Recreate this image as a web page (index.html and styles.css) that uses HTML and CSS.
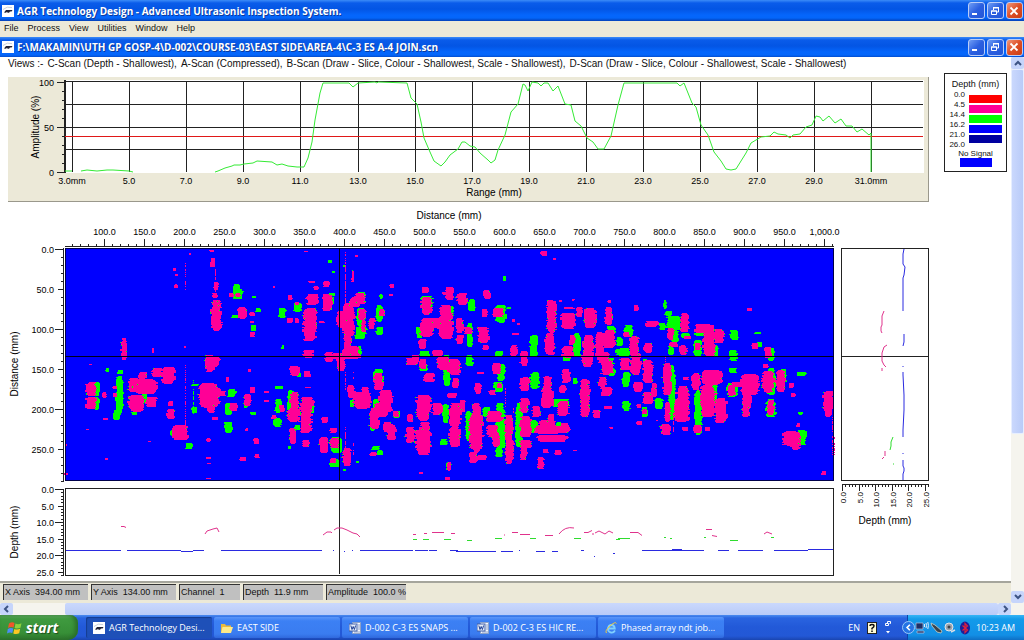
FILE: index.html
```html
<!DOCTYPE html>
<html lang="en">
<head>
    <meta charset="UTF-8">
    <meta name="viewport" content="width=device-width, initial-scale=1.0">
    <title>AGR Technology Design</title>
    <link rel="stylesheet" href="styles.css">
</head>
<body>
<!-- shared icons -->
<svg class="defs" width="0" height="0" aria-hidden="true">
    <symbol id="icon-agr" viewBox="0 0 12 12">
        <rect width="12" height="12" fill="#fff"/>
        <path d="M1 4.5Q5 .8 10 2.6" stroke="#c9d2dc" fill="none"/>
        <path d="M2 7.6L4 5h6.5L9.6 6.4H8L7 7.8H5.6L5 6.8 4 7.8z" fill="#223"/>
    </symbol>
    <symbol id="icon-min" viewBox="0 0 14 14"><path d="M3 10h5" stroke="#fff" stroke-width="2"/></symbol>
    <symbol id="icon-restore" viewBox="0 0 14 14">
        <path d="M5.5 6V4h5v4H9M5 3.5h6M3.5 7h5v3.5h-5zM3 7h6" stroke="#fff" fill="none"/>
    </symbol>
    <symbol id="icon-close" viewBox="0 0 14 14"><path d="M3.5 3.5l7 7M10.5 3.5l-7 7" stroke="#fff" stroke-width="1.8"/></symbol>
    <symbol id="icon-word" viewBox="0 0 12 12">
        <path d="M3.500 .5h8v11h-8z" fill="#f4f7ff" stroke="#8da2c8"/>
        <path d="M9 3h2M9 5h2M9 7h2M5 10h6" stroke="#8da2c8"/>
        <rect x="0" y="2" width="8" height="7" fill="#e8effc" stroke="#3e5ea8"/>
        <path d="M1.800 3.500l1.200 4 1.200-3 1.200 3 1.200-4" stroke="#1e3f94" fill="none"/>
    </symbol>
</svg>

<header class="titlebar">
    <svg class="app-icon"><use href="#icon-agr"/></svg>
    <h1>AGR Technology Design - Advanced Ultrasonic Inspection System.</h1>
    <div class="win-buttons">
        <button type="button" aria-label="Minimize"><svg><use href="#icon-min"/></svg></button>
        <button type="button" aria-label="Restore"><svg><use href="#icon-restore"/></svg></button>
        <button type="button" class="close" aria-label="Close"><svg><use href="#icon-close"/></svg></button>
    </div>
</header>

<nav class="menubar">
    <button type="button">File</button>
    <button type="button">Process</button>
    <button type="button">View</button>
    <button type="button">Utilities</button>
    <button type="button">Window</button>
    <button type="button">Help</button>
</nav>

<div class="titlebar document">
    <svg class="app-icon"><use href="#icon-agr"/></svg>
    <h2>F:\MAKAMIN\UTH GP GOSP-4\D-002\COURSE-03\EAST SIDE\AREA-4\C-3 ES A-4 JOIN.scn</h2>
    <div class="win-buttons">
        <button type="button" aria-label="Minimize file"><svg><use href="#icon-min"/></svg></button>
        <button type="button" aria-label="Restore file"><svg><use href="#icon-restore"/></svg></button>
        <button type="button" class="close" aria-label="Close file"><svg><use href="#icon-close"/></svg></button>
    </div>
</div>

<div class="client">
    <main class="scan">
        <p class="views">
            <span>Views :-</span>
            <span>C-Scan (Depth - Shallowest),</span>
            <span>A-Scan (Compressed),</span>
            <span>B-Scan (Draw - Slice, Colour - Shallowest, Scale - Shallowest),</span>
            <span>D-Scan (Draw - Slice, Colour - Shallowest, Scale - Shallowest)</span>
        </p>

        <div class="top-row">
            <svg id="a-scan" class="a-scan" viewBox="8 77 921 125"></svg>
            <section class="legend">
                <h3>Depth (mm)</h3>
                <div class="legend-body">
                    <div class="legend-values">
                        <span>0.0</span><span>4.5</span><span>14.4</span><span>16.2</span><span>21.0</span><span>26.0</span>
                    </div>
                    <div class="legend-colours">
                        <i class="red"></i><i class="pink"></i><i class="green"></i><i class="blue"></i><i class="navy"></i>
                    </div>
                </div>
                <p>No Signal</p>
                <i class="no-signal"></i>
            </section>
        </div>

        <div class="scan-grid">
            <svg id="c-scan" viewBox="0 206 834 278"></svg>
            <svg id="d-scan" class="tall" viewBox="834 206 177 375"></svg>
            <svg id="b-scan" viewBox="0 484 834 97"></svg>
        </div>

        <footer class="statusbar">
            <span class="w-axis">X Axis&nbsp; 394.00 mm</span>
            <span class="w-axis">Y Axis&nbsp; 134.00 mm</span>
            <span class="w-channel">Channel&nbsp; 1</span>
            <span class="w-depth">Depth&nbsp; 11.9 mm</span>
            <span class="w-amp">Amplitude&nbsp; 100.0 %</span>
        </footer>
    </main>

    <div class="scroll-v">
        <button type="button" aria-label="Scroll up"><svg viewBox="0 0 12 12"><path d="M3 8l3-3 3 3"/></svg></button>
        <div class="track"><div class="thumb"></div></div>
        <button type="button" aria-label="Scroll down"><svg viewBox="0 0 12 12"><path d="M3 4l3 3 3-3"/></svg></button>
    </div>
    <div class="scroll-h">
        <button type="button" aria-label="Scroll left"><svg viewBox="0 0 12 12"><path d="M7 3L4 6l3 3"/></svg></button>
        <div class="track"><div class="thumb"></div></div>
        <button type="button" aria-label="Scroll right"><svg viewBox="0 0 12 12"><path d="M5 3l3 3-3 3"/></svg></button>
    </div>
</div>

<div class="taskbar">
    <button type="button" class="start">
        <svg viewBox="0 0 16 16">
            <path d="M2 3.500Q5 1.500 7.500 3L6.600 7.500Q4 6.200 1 8z" fill="#f0562b"/>
            <path d="M8.500 3.400Q11 5 14.500 3.200L13.500 7.800Q10.500 9.200 7.600 7.900z" fill="#8dd13c"/>
            <path d="M.8 8.900Q3.600 7.300 6.300 8.500L5.300 13Q2.800 11.800 0 13.400z" fill="#4c8df6"/>
            <path d="M7.300 8.900Q10 10.300 13.200 8.800L12.200 13.300Q9.200 14.800 6.300 13.400z" fill="#fbc723"/>
        </svg>
        <span>start</span>
    </button>
    <div class="tasks">
        <button type="button" class="active"><svg><use href="#icon-agr"/></svg>AGR Technology Desi...</button>
        <button type="button">
            <svg viewBox="0 0 12 12"><path d="M0 2h4l1 1.500h5V11H0z" fill="#e9b93c"/><path d="M1.500 5H12l-2 6H0z" fill="#fde98a"/></svg>EAST SIDE
        </button>
        <button type="button"><svg><use href="#icon-word"/></svg>D-002 C-3 ES SNAPS ...</button>
        <button type="button"><svg><use href="#icon-word"/></svg>D-002 C-3 ES HIC RE...</button>
        <button type="button">
            <svg viewBox="0 0 12 12">
                <path d="M10 8.500Q8.500 11 6 10.500 3 10 3 6.500 3.500 3 6.500 3 9.500 3.200 9.800 6.500H4" stroke="#7fd0ff" stroke-width="1.800" fill="none"/>
                <path d="M1.500 11Q-.5 9 5 4T11.500 1.500" stroke="#f5c93a" fill="none"/>
            </svg>Phased array ndt job...
        </button>
    </div>
    <div class="language">
        <span>EN</span>
        <svg class="help" viewBox="0 0 10 12">
            <rect x=".5" y=".5" width="9" height="11" fill="#fffbd6" stroke="#222"/>
            <path d="M3 4q0-1.500 2-1.500T7 4q0 1-2 2.300V7.500M5 8.500V10" stroke="#111" stroke-width="1.500" fill="none"/>
        </svg>
        <svg class="lang-menu" viewBox="0 0 8 16">
            <path d="M3.500 3V1.500h3v2H5.500M1.500 3.500h3v2h-3z" stroke="#fff" fill="none"/>
            <path d="M2 11h4L4 13.500z" fill="#fff"/>
        </svg>
    </div>
    <div class="tray">
        <button type="button" aria-label="Show hidden icons"><svg viewBox="0 0 12 12"><path d="M7.500 3L4.500 6l3 3" stroke="#fff" stroke-width="1.800" fill="none"/></svg></button>
        <svg class="tray-icons" viewBox="0 0 56 16">
            <path d="M1 3h7v6H1zM2 11h7v2H2z" fill="#1d2f66" stroke="#b9c4dd" stroke-width=".7"/>
            <path d="M9.500 4v3M11 3q1 2.500 0 5M12.800 2q1.200 3.500 0 7" stroke="#dfe9fa" fill="none"/>
            <path d="M16 3l4 2 7 6-1 2-4-1-5-6z" fill="#39424c" stroke="#c9d0c4" stroke-width=".8"/>
            <circle cx="34" cy="7" r="4" fill="#9aa3ae" stroke="#e2e6ea"/>
            <circle cx="34" cy="7" r="1.500" fill="#3c434c"/>
            <path d="M36 12l4-2" stroke="#d8dde4" stroke-width="1.500"/>
            <ellipse cx="50" cy="8" rx="5" ry="6.500" fill="#1b1f9a"/>
            <path d="M47.500 5.500l5 4.500L50 12.500v-9L52.500 6l-5 4.500" stroke="#e0203c" fill="none" stroke-width="1.200"/>
        </svg>
        <time>10:23 AM</time>
    </div>
</div>

<script src="scans.js"></script>
</body>
</html>
```

FILE: styles.css
```css
* {
    box-sizing: border-box;
}

body {
    margin: 0;
    min-height: 100vh;
    display: flex;
    flex-direction: column;
    background: #fff;
    color: #111;
    font-family: "Liberation Sans", Arial, sans-serif;
    font-size: 10px;
}

h1, h2, h3, p {
    margin: 0;
}

button {
    padding: 0;
    border: none;
    background: none;
    color: inherit;
    font: inherit;
}

.defs {
    position: absolute;
}

/* Title bars */
.titlebar {
    display: flex;
    align-items: center;
    flex: none;
    height: 21px;
    padding: 0 1px 0 2px;
    background: linear-gradient(#3c8cf8 0, #0a5cea 3px, #0355e4 9px, #0566fc 15px, #0466fa 18px, #0340b8 21px);
}

.titlebar.document {
    height: 20px;
}

.titlebar h1, .titlebar h2 {
    flex: 1;
    margin-left: 3px;
    color: #fff;
    font-family: "Open Sans", "Trebuchet MS", sans-serif;
    font-size: 10px;
    font-weight: bold;
    line-height: 16px;
    text-shadow: 1px 1px #0b3a9c;
    white-space: nowrap;
}

.app-icon {
    width: 12px;
    height: 12px;
}

.win-buttons {
    display: flex;
    gap: 2px;
}

.win-buttons button {
    width: 17px;
    height: 17px;
    border: 1px solid #b9cdf8;
    border-radius: 3px;
    background: linear-gradient(135deg, #6f9df5, #2b5fe0 50%, #2456d6);
}

.win-buttons .close {
    background: linear-gradient(135deg, #f0987c, #de4f26 50%, #c93c14);
}

.win-buttons svg {
    display: block;
    width: 14px;
    height: 14px;
}

.menubar {
    display: flex;
    flex: none;
    gap: 9px;
    height: 16px;
    padding-left: 4px;
    padding-bottom: 2px;
    background: #ece9d8;
    font-size: 9px;
}

/* Client area */
.client {
    flex: 1;
    display: grid;
    grid-template-columns: minmax(0, 1fr) 13px;
    grid-template-rows: 1fr 12px;
    background: #f5f4ee;
}

.scan {
    display: flex;
    flex-direction: column;
    background: #fff;
}

.scan svg {
    display: block;
    width: 100%;
    overflow: visible;
}

.views {
    display: flex;
    gap: 4px;
    height: 14px;
    padding-left: 8px;
    line-height: 14px;
    white-space: nowrap;
}

.top-row {
    display: flex;
    align-items: flex-start;
    gap: 15px;
    padding: 2px 4px 4px 8px;
}

.a-scan {
    flex: 1;
    min-width: 0;
    margin-top: 4px;
    background: #ece9d8;
}

.legend {
    flex: none;
    width: 63px;
    height: 99px;
    padding-top: 4px;
    border: 1px solid #222;
    font-size: 8px;
    text-align: center;
}

.legend h3 {
    font-size: 9px;
    font-weight: normal;
    line-height: 13px;
}

.legend-body {
    display: flex;
    justify-content: flex-end;
    gap: 4px;
    padding-right: 4px;
}

.legend-values {
    display: flex;
    flex-direction: column;
    text-align: right;
}

.legend-values span {
    height: 10px;
    line-height: 8px;
}

.legend-colours {
    display: flex;
    flex-direction: column;
    gap: 2px;
    width: 33px;
    padding-top: 4px;
}

.legend-colours i {
    height: 8px;
}

.red { background: #f00; }
.pink { background: #ff0096; }
.green { background: #0f0; }
.blue { background: #00f; }
.navy { background: #0000a0; }

.legend p {
    line-height: 8px;
    margin-top: -1px;
}

.no-signal {
    display: block;
    width: 32px;
    height: 9px;
    margin: 0 auto;
    background: #00f;
}

.scan-grid {
    display: grid;
    grid-template-columns: 834fr 177fr;
}

.scan-grid .tall {
    grid-row: span 2;
}

/* Text and lines inside the charts */
.tick-label {
    font-size: 9px;
}

#d-scan .tick-label {
    font-size: 8px;
}

.axis-title {
    font-size: 10px;
}

.line {
    fill: none;
    stroke: #222;
    shape-rendering: crispEdges;
}

.cells {
    shape-rendering: crispEdges;
}

.statusbar {
    display: flex;
    gap: 3px;
    height: 22px;
    margin-top: auto;
    padding: 1px 3px 3px;
    border-top: 2px solid #a5a59c;
    background: #ece9d8;
    font-size: 9px;
    line-height: 15px;
    white-space: nowrap;
}

.statusbar span {
    padding-left: 1px;
    border-top: 1px solid #333;
    border-left: 1px solid #333;
    background: #c0c0c0;
}

.w-axis { width: 85px; }
.w-channel { width: 61px; }
.w-depth { width: 80px; }
.w-amp { width: 80px; }

/* Scrollbars */
.scroll-v, .scroll-h {
    display: flex;
}

.scroll-v {
    flex-direction: column;
}

.track {
    flex: 1;
    display: flex;
}

.scroll-v .track {
    flex-direction: column;
}

.scroll-v .thumb {
    height: 70%;
    border: 1px solid #e6eeff;
    border-radius: 2px;
    background: linear-gradient(90deg, #cad8fd, #b9cbf8);
}

.scroll-h .thumb {
    flex: 1;
    margin-left: 52px;
    border-radius: 2px;
    background: linear-gradient(#cad8fd, #b9cbf8);
}

.scroll-v button, .scroll-h button {
    flex: none;
    width: 13px;
    height: 12px;
    border-radius: 2px;
    background: #c6d5fb;
}

.scroll-v button svg, .scroll-h button svg {
    display: block;
    width: 12px;
    height: 12px;
    margin: auto;
    fill: none;
    stroke: #3d5484;
    stroke-width: 2;
}

/* Taskbar */
.taskbar {
    display: flex;
    align-items: stretch;
    flex: none;
    height: 25px;
    background: linear-gradient(#4b8cf0 0, #2a64e0 3px, #2259d8 12px, #2358d6 21px, #1a45b0 25px);
    color: #fff;
    font-family: "Open Sans", Tahoma, sans-serif;
    font-size: 9px;
}

.start {
    display: flex;
    align-items: center;
    gap: 3px;
    width: 78px;
    padding-left: 7px;
    border-radius: 0 8px 10px 0;
    background: linear-gradient(#65b065 0, #3f9a3f 4px, #378f37 18px, #2c742c 25px);
    box-shadow: inset -3px 0 4px #2a6d2a;
    font-size: 14px;
    font-style: italic;
    font-weight: bold;
    text-shadow: 1px 1px 1px #1d4d1d;
}

.start svg {
    width: 16px;
    height: 16px;
}

.tasks {
    flex: 1;
    display: flex;
    gap: 2px;
    min-width: 0;
    padding: 2px 0 2px 8px;
}

.tasks button {
    display: flex;
    align-items: center;
    gap: 4px;
    flex: 0 1 126px;
    min-width: 0;
    padding-left: 7px;
    border-radius: 2px;
    background: linear-gradient(#5a96fa 0, #3c80f4 4px, #3a7cf0 17px, #3068dc 21px);
    white-space: nowrap;
}

.tasks .active {
    background: #1e50b8;
    box-shadow: inset 1px 1px 1px #153c90;
}

.tasks svg {
    flex: none;
    width: 12px;
    height: 12px;
}

.language {
    display: flex;
    align-items: center;
    gap: 7px;
    margin-right: 15px;
}

.help {
    width: 10px;
    height: 12px;
}

.lang-menu {
    width: 8px;
    height: 16px;
}

.tray {
    display: flex;
    align-items: center;
    width: 117px;
    border-left: 1px solid #1042a8;
    background: linear-gradient(#35b5f6 0, #139bea 4px, #128fe6 20px, #0f6fc4 25px);
}

.tray button {
    flex: none;
    width: 13px;
    height: 13px;
    margin-left: -6px;
    border: 1px solid #9ac8f8;
    border-radius: 50%;
    background: #2474e4;
}

.tray button svg {
    display: block;
}

.tray-icons {
    flex: none;
    width: 56px;
    height: 16px;
    margin: 0 5px 0 0;
}

.tray time {
    white-space: nowrap;
}
```

FILE: scans.js
```js
const NS = 'http://www.w3.org/2000/svg';
const PINK = '#ff0096';
const GREEN = '#00ff00';
const BLUE = '#0000ff';

function add(parent, tag, attrs, text) {
    const node = document.createElementNS(NS, tag);
    for (const key in attrs) {
        node.setAttribute(key, attrs[key]);
    }
    if (text) {
        node.textContent = text;
    }
    parent.appendChild(node);
    return node;
}

function line(svg, d, stroke) {
    return add(svg, 'path', { d: d, class: 'line', style: stroke ? 'stroke:' + stroke : '' });
}

function label(svg, x, y, text, anchor, cls) {
    return add(svg, 'text', { x: x, y: y, 'text-anchor': anchor || 'middle', class: cls || 'tick-label' }, text);
}

function sideTitle(svg, x, y, text) {
    const node = label(svg, x, y, text, 'middle', 'axis-title');
    node.setAttribute('transform', `rotate(-90 ${x} ${y})`);
}

// ---------- A-Scan ----------
const aScan = document.getElementById('a-scan');
add(aScan, 'rect', { x: 65, y: 80, width: 859, height: 93, fill: '#fff' });
line(aScan, 'M8 201.5H928.500V77', '#9a988c');
line(aScan, 'M65 81.500H923M65 104.500H923M65 127.500H923M65 149.500H923M64.500 80V173M65.500 80V173');
for (let i = 0; i < 15; i++) {
    const x = Math.round(72 + i * 57.1);
    const mm = 3 + i * 2;
    line(aScan, `M${x + 0.5} 81V172`);
    label(aScan, x, 184, mm.toFixed(1) + (i === 0 || i === 14 ? 'mm' : ''));
}
for (let p = 0; p <= 100; p += 10) {
    const y = Math.round(172 - p * 0.9) + 0.5;
    line(aScan, `M${p % 50 ? 62 : 57} ${y}H65`);
}
label(aScan, 54, 86, '100', 'end');
label(aScan, 54, 131, '50', 'end');
label(aScan, 54, 176, '0', 'end');
sideTitle(aScan, 39, 127, 'Amplitude (%)');
label(aScan, 494, 196, 'Range (mm)', 'middle', 'axis-title');
line(aScan, 'M65 136.500H923', '#e01818');

const signal = [
    [65,171, 72,171],
    [81,171, 87,170, 97,171, 107,170, 113,170, 129,171, 133,172],
    [215,172, 218,171, 225,168, 232,166, 234,165, 240,165, 244,164, 253,163, 257,161, 272,162, 277,165, 282,164,
     288,166, 297,167, 304,167, 308,158, 312,142, 315,120, 320,93, 323,83, 349,83, 353,87, 358,83, 375,82, 377,83,
     378,82, 407,83, 411,98, 417,104, 421,122, 424,138, 430,152, 434,161, 441,166, 445,162, 450,155, 458,149,
     462,142, 465,142, 470,146, 475,147, 480,153, 488,160, 491,163, 495,160, 498,150, 505,135, 511,112, 518,104,
     523,84, 525,85, 528,91, 532,82, 538,83, 541,86, 544,83, 548,83, 553,91, 558,86, 565,104, 571,105, 575,121,
     581,126, 587,138, 593,142, 598,149, 604,149, 611,136, 618,105, 624,83, 677,83, 680,86, 684,83, 692,103,
     696,107, 701,125, 708,135, 714,152, 721,161, 726,169, 731,170, 736,169, 746,153, 751,143, 761,137, 770,136,
     774,132, 778,134, 786,135, 790,138, 793,135, 800,134, 806,127, 812,125, 816,116, 820,117, 823,121, 829,116,
     835,123, 841,119, 846,126, 852,126, 857,132, 862,129, 869,135, 871,133, 871,172]
];
signal.forEach(points => add(aScan, 'polyline', { points: points.join(' '), fill: 'none', stroke: '#35ea35' }));

// ---------- C-Scan ----------
// Indications are grouped in three strips. Edges are x1, y1, x2, y2 in scan steps, three steps to a unit.
const strips = [
    {
        x: 0,
        green: [
            [697,132,720,178],[700,148,730,178],[695,224,715,234],[757,168,768,175],[768,204,782,216],[752,256,768,272],
            [835,205,858,235],[880,188,906,216],[985,60,994,68],[998,93,1006,99],[985,160,1006,168],[990,170,1000,192],
            [282,425,298,468],[282,470,297,510],[354,390,368,402],[348,408,370,520],[338,510,363,540],[318,385,326,395],
            [425,445,440,490],[395,516,412,526],[682,448,708,470],[675,488,695,526],[672,545,698,578],[732,485,742,505],
            [750,515,768,525],[555,608,578,626],[575,500,592,520],[575,433,595,438],[825,438,850,446],[825,478,845,520],
            [820,535,845,562],[862,450,880,520],[928,490,942,520],[885,555,900,570],[1000,590,1026,640],
            [990,660,1018,682],[865,618,872,626],[846,315,850,328],[892,400,902,410],[512,570,520,585]
        ],
        pink: [
            [257,425,292,468],[255,470,290,508],[368,293,378,308],[363,306,381,360],[384,415,420,455],[415,397,440,418],
            [400,418,475,462],[452,385,490,412],[484,382,527,432],[384,466,435,516],[437,472,472,500],[338,438,350,448],
            [340,460,350,472],[308,455,318,475],[505,482,520,497],[500,508,525,538],[514,556,567,600],[595,428,660,505],
            [622,495,645,520],[655,453,678,468],[638,530,655,540],[615,348,663,380],[616,345,645,395],[633,180,666,272],
            [642,125,654,150],[638,158,652,174],[640,180,656,200],[632,55,644,82],[628,30,642,36],[712,200,742,236],
            [688,160,700,170],[706,160,720,172],[748,215,764,228],[748,242,764,250],[750,275,764,292],[750,440,765,458],
            [690,488,712,514],[733,462,754,498],[865,165,876,180],[862,235,878,250],[885,235,895,248],[885,185,896,194],
            [918,162,958,194],[925,122,945,130],[940,137,955,150],[970,122,990,140],[965,162,995,214],[910,205,955,245],
            [907,235,950,303],[908,330,942,354],[975,335,1000,365],[960,242,972,250],[870,378,900,408],[912,392,932,410],
            [870,455,898,530],[860,505,900,545],[838,495,852,515],[900,472,942,520],[897,510,937,578],[915,440,935,445],
            [868,565,888,612],[908,600,930,622],[965,532,985,548],[958,590,985,640],[990,565,1010,580],
            [988,595,1018,625],[990,655,1008,668],[720,650,738,662],[762,595,776,612],[765,642,778,655],[620,595,632,605],
            [618,650,632,658],[738,563,744,572],[745,388,752,395],[457,325,461,340],[793,452,806,458],[793,480,806,486],
            [815,525,828,538],[522,85,527,92],[524,102,532,108],[524,132,532,145],[568,38,572,46],[624,668,632,673],
            [620,713,632,718],[680,412,686,425],[268,372,274,376],[308,535,322,539],[258,566,264,570],[316,655,324,659],
            [446,602,450,606],[195,612,200,618],[195,698,202,704],[912,32,922,37],[820,138,826,144],[553,318,557,324]
        ],
        dashes: [[554,65,155],[554,360,565],[1034,60,240],[646,88,180]],
        greenDashes: [[578,420,520]]
    },
    {
        x: 330,
        green: [
            [80,155,110,190],[80,205,108,262],[73,262,112,298],[138,195,158,245],[138,262,160,284],[270,168,310,200],
            [258,260,280,295],[350,198,372,232],[415,178,435,212],[412,248,428,320],[495,195,530,248],[521,108,527,122],
            [530,200,542,208],[130,388,162,430],[60,480,72,502],[130,478,145,510],[120,535,135,572],[125,618,148,630],
            [142,630,158,645],[190,512,210,535],[268,332,298,350],[408,345,430,378],[495,334,518,350],[342,370,360,438],
            [490,425,518,455],[500,372,526,422],[338,492,356,548],[406,512,425,602],[458,502,480,530],[495,490,526,630],
            [330,598,352,615],[495,628,518,650],[557,490,577,620],[600,395,628,448],[600,285,625,350],[730,280,752,350],
            [700,340,722,362],[728,415,742,432],[600,540,622,580],[680,545,692,580],[658,478,722,500],[0,590,36,640],
            [0,658,28,682],[268,370,292,392],[82,318,94,345],[340,345,358,360],[150,162,156,176],[350,665,364,690],
            [42,76,48,82],[78,662,86,668],[40,688,46,694],[500,545,524,560]
        ],
        pink: [
            [75,160,106,192],[60,170,90,200],[38,190,75,290],[20,212,55,265],[42,280,65,345],[36,318,88,352],[0,340,94,358],
            [20,352,45,392],[85,208,108,240],[116,235,135,268],[147,208,165,228],[95,240,106,275],[180,132,190,145],
            [66,90,71,125],[178,161,188,168],[275,140,295,160],[272,172,308,225],[268,235,312,290],[265,298,290,328],
            [300,235,335,265],[345,142,372,180],[338,155,352,165],[380,158,412,196],[328,195,368,250],[322,228,370,298],
            [378,235,400,280],[378,285,402,312],[402,262,426,282],[460,150,482,178],[455,208,472,232],[485,205,522,232],
            [442,262,476,290],[445,285,478,308],[458,315,476,330],[632,32,650,48],[650,180,680,280],[690,220,738,266],
            [740,200,757,230],[765,208,800,262],[645,278,675,345],[718,286,735,315],[695,318,732,355],[758,288,790,378],
            [542,315,562,352],[570,332,595,378],[305,330,340,350],[225,355,265,376],[245,345,268,362],[268,358,290,388],
            [320,352,358,390],[350,358,395,405],[280,400,315,425],[367,415,388,445],[440,397,460,403],[435,428,453,462],
            [484,368,512,402],[475,450,498,466],[502,428,514,445],[132,398,160,450],[52,435,75,475],[95,440,115,462],
            [68,455,125,508],[144,450,190,515],[130,490,175,530],[118,505,148,568],[160,545,188,575],[170,555,198,600],
            [190,514,206,532],[120,636,140,648],[256,465,305,542],[305,490,340,525],[232,522,248,545],[272,545,298,570],
            [256,560,305,645],[228,562,255,610],[350,460,382,474],[355,488,395,560],[388,480,405,515],[356,560,392,622],
            [425,490,455,640],[415,518,462,630],[418,635,442,670],[468,512,520,545],[470,555,505,590],[487,575,508,622],
            [525,525,550,600],[526,590,552,672],[570,475,598,520],[570,528,605,590],[568,600,605,625],[570,615,592,660],
            [570,412,600,452],[632,445,672,505],[640,408,665,460],[605,498,632,530],[625,540,680,582],[620,585,714,606],
            [655,522,672,550],[690,550,720,580],[680,482,720,528],[695,388,722,430],[688,434,708,460],[752,420,778,532],
            [622,650,642,688],[640,628,655,640],[675,630,695,645],[345,710,362,722],[352,665,362,692],[38,625,65,678],
            [0,595,28,620],[0,565,18,578],[268,696,278,702],[444,645,468,660],[610,558,700,582],[0,175,8,195],
            [75,44,84,50],[548,238,554,246],[560,248,568,254],[690,180,696,185],[695,200,735,206],[726,178,732,184],
            [670,55,676,60],[548,278,566,284],[732,630,738,634]
        ],
        dashes: [[45,35,180],[45,390,450],[68,395,440],[524,445,500],[45,560,640],[548,500,530],[68,610,650]],
        greenDashes: []
    },
    {
        x: 580,
        green: [
            [80,258,106,282],[132,256,160,290],[108,290,128,318],[108,325,152,350],[80,355,102,375],[82,385,105,408],
            [255,214,276,228],[258,228,305,270],[238,248,258,270],[252,180,258,208],[270,270,295,305],[265,318,280,345],
            [340,300,366,348],[342,278,372,288],[395,315,415,350],[448,270,477,300],[448,330,472,362],[445,383,472,398],
            [525,276,541,281],[530,305,545,322],[565,325,583,362],[560,385,587,465],[600,388,620,425],[650,397,680,408],
            [655,516,668,524],[650,570,680,614],[558,478,588,532],[440,428,474,472],[265,375,285,540],[343,450,366,585],
            [126,395,152,440],[128,482,150,512],[225,475,250,508],[190,358,203,372],[185,500,203,530],[390,430,412,490],
            [380,270,400,285],[305,280,330,295]
        ],
        pink: [
            [12,205,45,265],[75,202,98,254],[162,195,174,212],[84,180,90,190],[195,242,235,262],[500,204,516,213],
            [300,220,328,275],[262,265,282,300],[342,252,402,278],[368,275,408,348],[400,268,432,310],[310,287,332,298],
            [298,314,322,345],[268,305,295,322],[345,308,360,330],[8,285,42,350],[5,335,38,380],[45,275,74,350],
            [70,270,108,325],[50,335,90,370],[60,360,100,405],[130,275,148,290],[148,288,178,350],[120,355,150,390],
            [150,340,186,405],[192,308,218,340],[187,360,220,430],[160,425,188,455],[185,455,225,492],[215,430,230,470],
            [55,410,80,440],[60,440,98,468],[0,418,30,532],[38,510,62,535],[70,498,98,508],[170,542,184,556],
            [187,508,200,522],[248,370,276,465],[255,485,270,545],[243,552,272,585],[288,438,328,500],[282,470,330,545],
            [310,412,325,420],[335,398,362,450],[362,390,428,434],[358,435,408,530],[402,475,443,550],[340,555,365,578],
            [308,560,325,572],[375,562,390,572],[443,435,466,468],[480,402,540,465],[487,455,516,505],[487,500,508,532],
            [455,425,490,440],[516,308,535,328],[552,322,576,355],[545,392,583,460],[588,390,616,455],[627,430,640,445],
            [632,458,645,472],[562,480,583,525],[605,573,662,618],[630,595,662,630],[650,548,660,560],[725,692,738,706],
            [728,452,762,515],[735,500,755,532],[550,372,565,384],[90,562,97,568],[228,540,232,544],[170,492,182,504]
        ],
        dashes: [[254,350,375],[757,530,645],[278,515,580],[762,590,645]],
        greenDashes: []
    }
];

let seed = 7;
function noise() {
    seed = (seed * 16807) % 2147483647;
    return seed / 2147483647;
}

// One ragged patch, drawn as single-unit rows. The edges hold for a row or two, then step.
function patch(x0, box) {
    const left = x0 + box[0] / 3;
    const right = x0 + box[2] / 3;
    const top = Math.round(240 + box[1] / 3);
    const bottom = Math.max(top + 1, Math.round(240 + box[3] / 3));
    const mid = (left + right) / 2;
    const half = (right - left) / 2;
    const rough = Math.min(3, half * 0.45);
    const rows = [];
    let cutLeft = 0;
    let cutRight = 0;
    for (let y = top; y < bottom; y++) {
        const t = Math.abs((y + 0.5 - top) / (bottom - top) * 2 - 1);
        const reach = half * Math.pow(1 - Math.pow(t, 4), 0.25);
        if (noise() < 0.6) {
            cutLeft = noise() * rough - 0.8;
        }
        if (noise() < 0.6) {
            cutRight = noise() * rough - 0.8;
        }
        const a = Math.round(mid - reach + cutLeft);
        const b = Math.max(a + 1, Math.round(mid + reach - cutRight));
        rows.push([a, y, Math.min(b, 833)]);
    }
    return rows;
}

function rowsToPath(rows) {
    return rows.map(r => `M${r[0]} ${r[1]}H${r[2]}v1H${r[0]}z`).join('');
}

const cScan = document.getElementById('c-scan');
label(cScan, 449, 219, 'Distance (mm)', 'middle', 'axis-title');
add(cScan, 'rect', { x: 65, y: 248, width: 769, height: 233, fill: BLUE });

const greenRows = [];
const pinkRows = [];
const fleckRows = [];

function dashRows(strip, dashes, rows) {
    dashes.forEach(dash => {
        const x = Math.round(strip.x + dash[0] / 3);
        for (let y = 240 + Math.round(dash[1] / 3); y < 240 + dash[2] / 3; y++) {
            if (noise() < 0.55) {
                rows.push([x, y, x + 1]);
            }
        }
    });
}

strips.forEach(strip => {
    strip.green.forEach(box => greenRows.push(...patch(strip.x, box)));
    strip.pink.forEach(box => {
        const rows = patch(strip.x, box);
        pinkRows.push(...rows);
        rows.forEach(r => {
            if (rows.length > 6 && noise() < 0.12) {
                const x = noise() < 0.5 ? r[0] - 1 : r[2] - 1;
                fleckRows.push([x, r[1], x + 1]);
            }
        });
    });
    dashRows(strip, strip.dashes, pinkRows);
    dashRows(strip, strip.greenDashes, greenRows);
});
add(cScan, 'path', { d: rowsToPath(greenRows), fill: GREEN, class: 'cells' });
add(cScan, 'path', { d: rowsToPath(pinkRows), fill: PINK, class: 'cells' });
add(cScan, 'path', { d: rowsToPath(fleckRows), fill: GREEN, class: 'cells' });

line(cScan, 'M65.500 248.500H833.500V480.500H65.500z', '#00004a');
line(cScan, 'M65 356.500H834M339.500 248V481', '#00001c');
line(cScan, 'M65 246.500H834M63.500 248V481');
for (let mm = 60; mm <= 1010; mm += 10) {
    const x = Math.round(24 + mm * 0.8) + 0.5;
    line(cScan, `M${x} ${mm % 50 ? 244 : 239}V247`);
    if (mm % 50 === 0 && mm >= 100) {
        label(cScan, x, 235, mm === 1000 ? '1,000.0' : mm.toFixed(1));
    }
}
for (let mm = 0; mm <= 290; mm += 10) {
    const y = Math.round(249 + mm * 0.8) + 0.5;
    line(cScan, `M${mm % 50 ? 61 : mm % 100 ? 58 : 55} ${y}H64`);
    if (mm % 50 === 0) {
        label(cScan, 54, y + 3, mm.toFixed(1), 'end');
    }
}
sideTitle(cScan, 18, 364, 'Distance (mm)');

// ---------- B-Scan ----------
const bScan = document.getElementById('b-scan');
line(bScan, 'M65.500 488.500H833.500V575.500H65.500zM339.500 488V574');
line(bScan, 'M63.500 489V576');
for (let mm = 0; mm <= 26; mm++) {
    const y = Math.round(489 + mm * 3.3) + 0.5;
    line(bScan, `M${mm % 5 ? 61 : mm % 10 ? 58 : 55} ${y}H64`);
    if (mm % 5 === 0) {
        label(bScan, 54, y + 3, mm.toFixed(1), 'end');
    }
}
sideTitle(bScan, 18, 532, 'Depth (mm)');

line(bScan, 'M66 550.500H121M127 550.500H181M181 551.500H193M193 550.500H204M221 550.500H279M279 550.500H322' +
    'M333 550.500h1M344 551.500h1M352 550.500h1M360 550.500H403M403 550.500H413M415 550.500H428M429 550.500H437' +
    'M450 550.500H458M456 551.500H496M501 551.500H513M519 550.500h1M536 551.500H545M552 551.500H558M581 550.500h3' +
    'M594 556.500h1M613 553.500h2M642 550.500H704M672 549.500h10M718 550.500H729M738 550.500H763M774 550.500H808' +
    'M808 549.500H833', '#2a2ae0');
add(bScan, 'path', {
    d: 'M121 526.500h3l2 1M205 534l2-3 6-2 4-1 2 4M323 535l4-3h4l1 1M334 530l3-2h5l5 2 6 3 4 1 3 3' +
        'M413 534.500h3M424 533.500h3M432 532.500h12M451 533.500h4M504 535h1M512 532.500h6M520 534.500h10M545 535.500h8' +
        'M559 534q6-8 15-6M584 532.500h4l4-2M592 534h2M595 533l4-2 6 3 4-3 4 2M630 532.500h8l4 3M706 529.500h6' +
        'M712 535.500l5 1M764 534l3-2 5 2',
    fill: 'none', stroke: '#e0328c'
});
line(bScan, 'M413 539.500h4M423 539.500h6M444 539.500h7M467 540.500h5M495 538.500h7M530 538.500h6M574 538.500h7' +
    'M616 539.500h4M618 538.500h12M664 537.500h2M670 538.500h2M704 537.500h2M730 540.500h8M771 537.500h3', '#2fdc2f');

// ---------- D-Scan ----------
const dScan = document.getElementById('d-scan');
line(dScan, 'M841.500 248.500H928.500V480.500H841.500zM841 356.500H929');
line(dScan, 'M842 484.500H928');
for (let mm = 0; mm <= 26; mm++) {
    const x = Math.round(842 + mm * 3.3) + 0.5;
    line(dScan, `M${x} 484V${mm % 5 ? 487 : 491}`);
    if (mm % 5 === 0) {
        const text = label(dScan, x + 3, 492, mm.toFixed(1), 'end');
        text.setAttribute('transform', `rotate(-90 ${x + 3} 492)`);
    }
}
label(dScan, 885, 524, 'Depth (mm)', 'middle', 'axis-title');
add(dScan, 'path', {
    d: 'M904 249l-1 5v10l2 3-1 8-1 3v33M904 334v8l-1 4M903 366v1M903 372v3l1 20 0 15-1 20V437M903 453v1M903 460v6l1 2v3l-1 3v6',
    fill: 'none', stroke: '#2a2ae0'
});
add(dScan, 'path', {
    d: 'M884 311l-2 5v9l-1 2v4l1 2M887 345l-3 2-2 6v8l2 4 2 2M882 368v3M885 451v5M884 457l-2 2',
    fill: 'none', stroke: '#e0328c'
});
add(dScan, 'path', { d: 'M893 437l-2 5v4l-1 4M893 464h1', fill: 'none', stroke: '#2fdc2f' });
```
